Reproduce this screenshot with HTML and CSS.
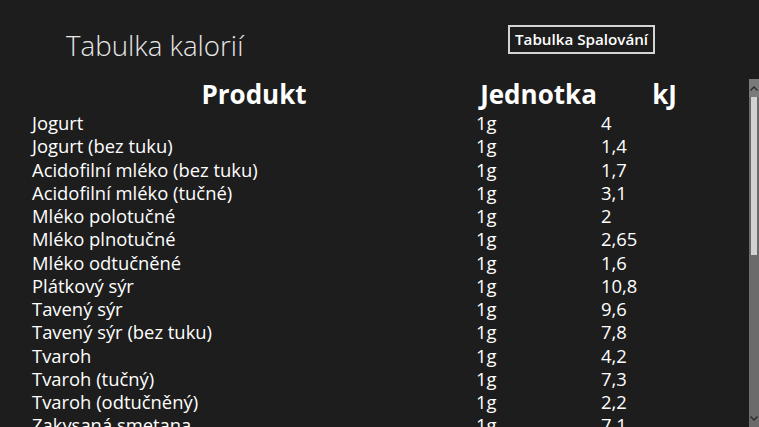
FILE: index.html
```html
<!DOCTYPE html>
<html lang="cs">
<head>
<meta charset="utf-8">
<title>Tabulka kalorií</title>
<link rel="stylesheet" href="styles.css">
</head>
<body>
<div class="app">
  <header class="top">
    <h1 class="title">Tabulka kalorií</h1>
    <button class="btn">Tabulka Spalování</button>
  </header>
  <div class="scrollarea">
    <div class="table">
      <div class="th th-prod">Produkt</div>
      <div class="th th-unit">Jednotka</div>
      <div class="th th-kj">kJ</div>

      <div class="td">Jogurt</div><div class="td">1g</div><div class="td">4</div>
      <div class="td">Jogurt (bez tuku)</div><div class="td">1g</div><div class="td">1,4</div>
      <div class="td">Acidofilní mléko (bez tuku)</div><div class="td">1g</div><div class="td">1,7</div>
      <div class="td">Acidofilní mléko (tučné)</div><div class="td">1g</div><div class="td">3,1</div>
      <div class="td">Mléko polotučné</div><div class="td">1g</div><div class="td">2</div>
      <div class="td">Mléko plnotučné</div><div class="td">1g</div><div class="td">2,65</div>
      <div class="td">Mléko odtučněné</div><div class="td">1g</div><div class="td">1,6</div>
      <div class="td">Plátkový sýr</div><div class="td">1g</div><div class="td">10,8</div>
      <div class="td">Tavený sýr</div><div class="td">1g</div><div class="td">9,6</div>
      <div class="td">Tavený sýr (bez tuku)</div><div class="td">1g</div><div class="td">7,8</div>
      <div class="td">Tvaroh</div><div class="td">1g</div><div class="td">4,2</div>
      <div class="td">Tvaroh (tučný)</div><div class="td">1g</div><div class="td">7,3</div>
      <div class="td">Tvaroh (odtučněný)</div><div class="td">1g</div><div class="td">2,2</div>
      <div class="td">Zakysaná smetana</div><div class="td">1g</div><div class="td">7,1</div>
    </div>
    <div class="scrollbar">
      <div class="sb-arrow sb-up">
        <svg width="8" height="5" viewBox="0 0 8 5"><path d="M0.5 4.5 L4 1 L7.5 4.5" fill="none" stroke="#2a2a2a" stroke-width="1.3"/></svg>
      </div>
      <div class="sb-thumb"></div>
      <div class="sb-track"></div>
      <div class="sb-arrow sb-down">
        <svg width="8" height="5" viewBox="0 0 8 5"><path d="M0.5 0.5 L4 4 L7.5 0.5" fill="none" stroke="#2a2a2a" stroke-width="1.3"/></svg>
      </div>
    </div>
  </div>
</div>
</body>
</html>
```
FILE: styles.css
```css
html, body {
  margin: 0;
  padding: 0;
  height: 100%;
  background: #1d1d1d;
  overflow: hidden;
}
body {
  font-family: "Open Sans", "Noto Sans", sans-serif;
  color: #ffffff;
}
.app {
  display: flex;
  flex-direction: column;
  height: 427px;
}
.top {
  display: flex;
  align-items: flex-start;
  height: 78px;
  box-sizing: border-box;
  padding-left: 66px;
}
.title {
  margin: 0;
  padding-top: 25px;
  font-weight: 300;
  font-size: 27.7px;
  line-height: 40px;
  color: #e8e8e8;
  width: 442px;
}
.btn {
  margin-top: 25px;
  height: 29px;
  padding: 0 5px;
  background: transparent;
  border: 2px solid #d4d4d4;
  color: #fff;
  font-family: "Open Sans", "Noto Sans", sans-serif;
  font-weight: 600;
  font-size: 15.2px;
  line-height: 25px;
}
.scrollarea {
  flex: 1;
  display: flex;
  min-height: 0;
}
.table {
  flex: 1;
  display: grid;
  grid-template-columns: 444px 125px 127px;
  grid-template-rows: 33px;
  grid-auto-rows: 23.25px;
  padding-left: 32px;
  align-content: start;
}
.th {
  font-weight: 700;
  font-size: 26px;
  line-height: 33px;
  text-align: center;
}
.td {
  font-size: 18.4px;
  line-height: 23.25px;
  white-space: nowrap;
}
.scrollbar {
  width: 10px;
  display: flex;
  flex-direction: column;
  background: #6b6b6b;
  margin-top: 1px;
}
.sb-arrow {
  height: 18px;
  display: flex;
  align-items: center;
  justify-content: center;
  background: #7a7a7a;
}
.sb-down {
  background: #6b6b6b;
}
.sb-thumb {
  height: 158px;
  margin: 0 2px;
  background: #d2d2d2;
}
.sb-track {
  flex: 1;
}
```
